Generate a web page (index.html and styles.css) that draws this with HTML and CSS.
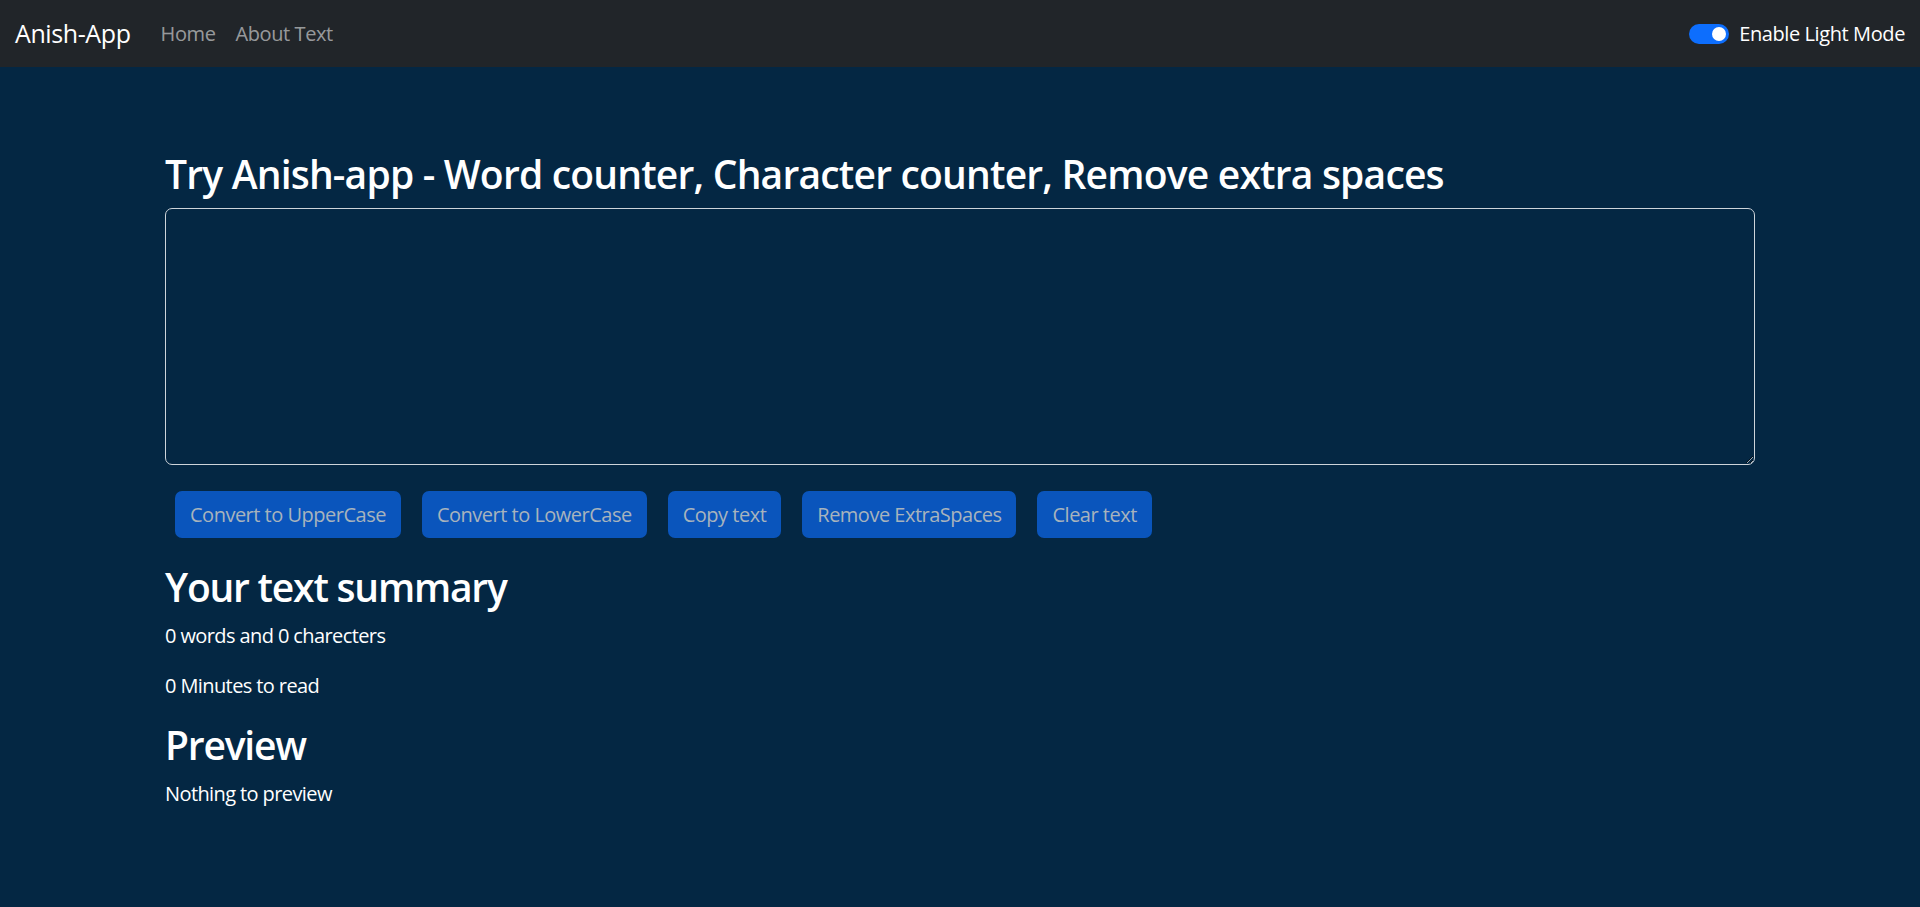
FILE: index.html
```html
<!DOCTYPE html>
<html lang="en">
<head>
<meta charset="utf-8">
<title>Anish-App</title>
<link rel="stylesheet" href="styles.css">
</head>
<body>
<nav class="navbar">
  <a class="brand" href="#">Anish-App</a>
  <ul class="nav-links">
    <li><a class="nav-link" href="#">Home</a></li>
    <li><a class="nav-link" href="#">About Text</a></li>
  </ul>
  <div class="mode-switch">
    <span class="switch-track"><span class="switch-knob"></span></span>
    <label class="switch-label">Enable Light Mode</label>
  </div>
</nav>
<main class="container">
  <h1 class="title">Try Anish-app - Word counter, Character counter, Remove extra spaces</h1>
  <textarea class="text-box" rows="8"></textarea>
  <div class="btn-row">
    <button class="btn" disabled>Convert to UpperCase</button>
    <button class="btn" disabled>Convert to LowerCase</button>
    <button class="btn" disabled>Copy text</button>
    <button class="btn" disabled>Remove ExtraSpaces</button>
    <button class="btn" disabled>Clear text</button>
  </div>
  <section class="summary">
    <h2 class="sub-title">Your text summary</h2>
    <p class="info">0 words and 0 charecters</p>
    <p class="info">0 Minutes to read</p>
    <h2 class="sub-title">Preview</h2>
    <p class="info">Nothing to preview</p>
  </section>
</main>
</body>
</html>
```

FILE: styles.css
```css
html, body {
  margin: 0;
  padding: 0;
}
body {
  min-height: 100vh;
  background: #042743;
  color: #ffffff;
  font-family: "Segoe UI", "Open Sans", "Noto Sans", sans-serif;
  font-size: 20px;
  line-height: 30px;
  letter-spacing: -0.03em;
}
.navbar {
  height: 67px;
  box-sizing: border-box;
  background: #212529;
  display: flex;
  align-items: center;
  padding: 0 15px;
  letter-spacing: -0.02em;
}
.brand {
  color: #ffffff;
  text-decoration: none;
  font-size: 25px;
  line-height: 37px;
  margin-right: 20px;
}
.nav-links {
  list-style: none;
  display: flex;
  margin: 0;
  padding: 0;
  flex: 1;
}
.nav-link {
  display: block;
  padding: 0 10px;
  color: rgba(255, 255, 255, 0.55);
  text-decoration: none;
  font-size: 20px;
}
.mode-switch {
  display: flex;
  align-items: center;
  gap: 10px;
}
.switch-track {
  width: 40px;
  height: 20px;
  box-sizing: border-box;
  border-radius: 10px;
  background: #0d6efd;
  display: flex;
  align-items: center;
  justify-content: flex-end;
  padding-right: 3px;
}
.switch-knob {
  width: 14px;
  height: 14px;
  border-radius: 50%;
  background: #ffffff;
}
.switch-label {
  font-size: 20px;
  color: #ffffff;
}
.container {
  padding: 83px 165px 40px;
}
.title {
  font-size: 39px;
  line-height: 48px;
  font-weight: 600;
  letter-spacing: -0.8px;
  margin: 0 0 10px;
}
.text-box {
  display: block;
  width: 100%;
  box-sizing: border-box;
  height: 257px;
  background: #042743;
  color: #ffffff;
  border: 1px solid #ced4da;
  border-radius: 7px;
  padding: 7px 15px;
  font-family: inherit;
  font-size: 20px;
}
.btn-row {
  display: flex;
  gap: 21px;
  padding: 0 10px;
  margin-top: 26px;
}
.btn {
  height: 47px;
  padding: 0 15px;
  border: none;
  border-radius: 7px;
  background: #0a55bc;
  color: #a7b3bd;
  font-family: inherit;
  font-size: 20px;
  letter-spacing: -0.025em;
}
.summary {
  margin-top: 25px;
}
.sub-title {
  font-size: 39px;
  line-height: 48px;
  font-weight: 600;
  letter-spacing: -1.2px;
  margin: 0 0 10px;
}
.info {
  margin: 0 0 20px;
}
```
